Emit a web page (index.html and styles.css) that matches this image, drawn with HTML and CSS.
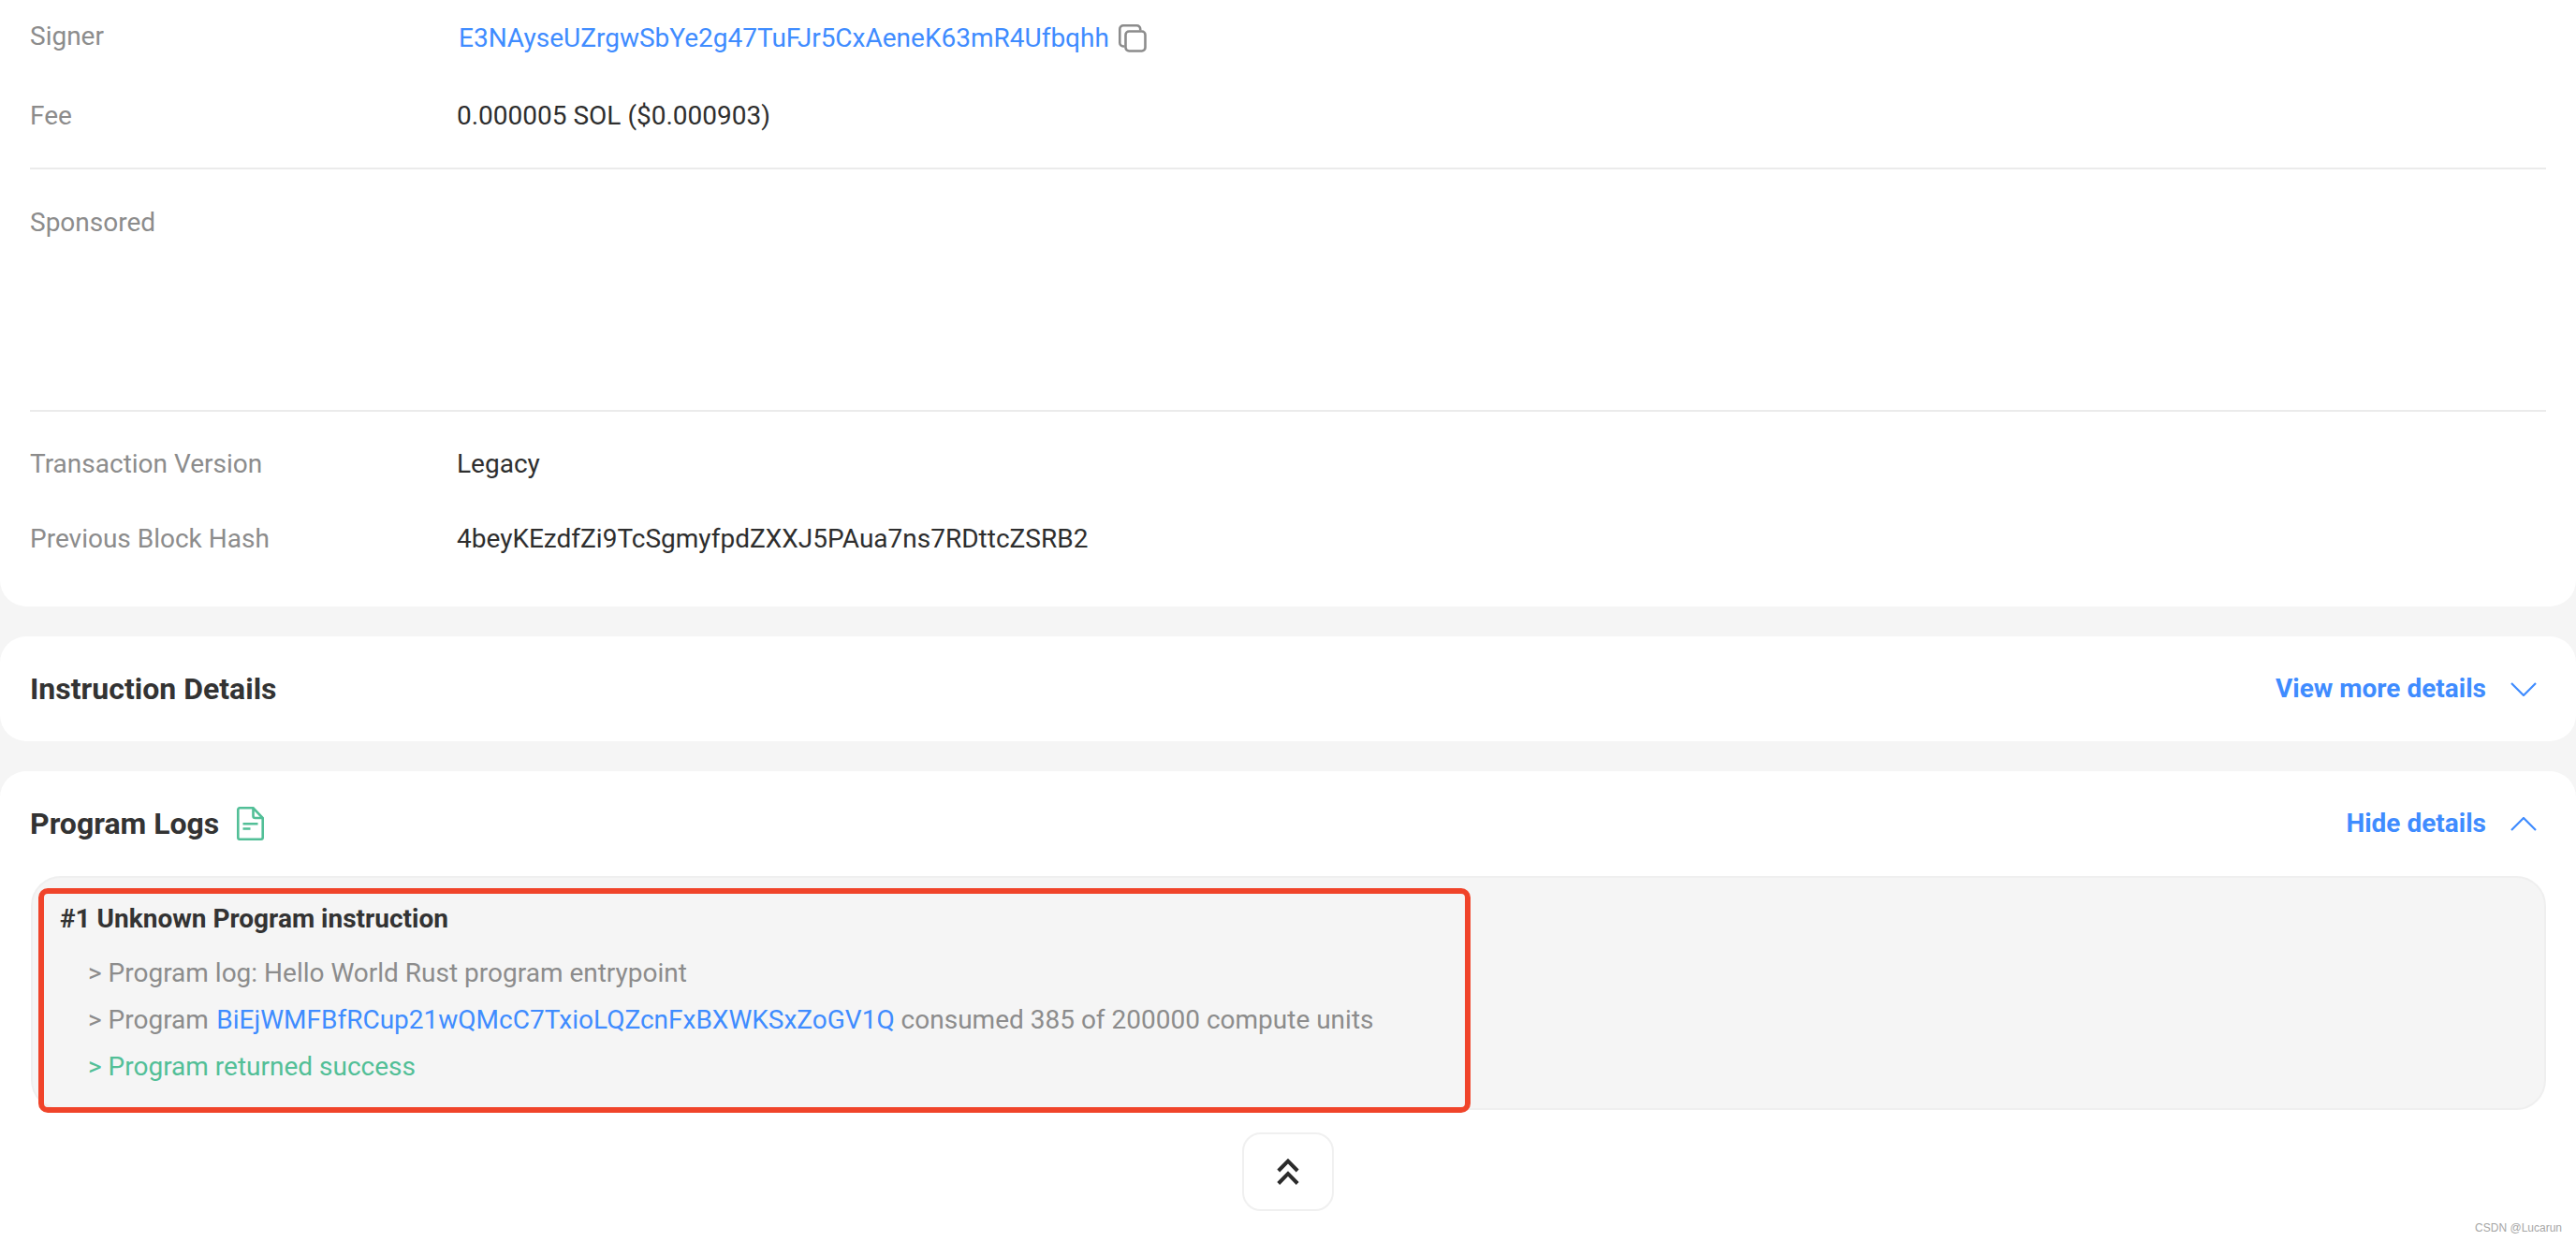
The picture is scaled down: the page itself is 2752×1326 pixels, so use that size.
FILE: index.html
```html
<!DOCTYPE html>
<html lang="en">
<head>
<meta charset="utf-8">
<title>Transaction details</title>
<link rel="stylesheet" href="styles.css">
</head>
<body>
<section class="card overview">
  <div class="row row-signer">
    <span class="label">Signer</span>
    <span class="value value-signer">
      <a class="link" href="#">E3NAyseUZrgwSbYe2g47TuFJr5CxAeneK63mR4Ufbqhh</a>
      <svg class="copy-icon" viewBox="0 0 30 30" fill="none" stroke="#8c8c8c" stroke-width="2.6" aria-hidden="true">
        <path d="M6.5 23.5 H5 A3.7 3.7 0 0 1 1.3 19.8 V5 A3.7 3.7 0 0 1 5 1.3 H19.5 A3.7 3.7 0 0 1 23.2 5 V6.5"/>
        <rect x="7.5" y="7.5" width="21" height="21" rx="3.7"/>
      </svg>
    </span>
  </div>
  <div class="row row-fee">
    <span class="label">Fee</span>
    <span class="value">0.000005 SOL ($0.000903)</span>
  </div>
  <hr class="rule">
  <div class="row row-sponsored">
    <span class="label">Sponsored</span>
  </div>
  <hr class="rule">
  <div class="row row-version">
    <span class="label">Transaction Version</span>
    <span class="value">Legacy</span>
  </div>
  <div class="row row-hash">
    <span class="label">Previous Block Hash</span>
    <span class="value">4beyKEzdfZi9TcSgmyfpdZXXJ5PAua7ns7RDttcZSRB2</span>
  </div>
</section>

<section class="card collapsed">
  <header class="card-head">
    <h2 class="title">Instruction Details</h2>
    <a class="toggle" href="#">
      <span>View more details</span>
      <svg class="chevron" viewBox="0 0 28 15" fill="none" stroke="#3f8cff" stroke-width="2.2" aria-hidden="true"><path d="M1 1 L14 14 L27 1"/></svg>
    </a>
  </header>
</section>

<section class="card logs">
  <header class="card-head">
    <h2 class="title title-logs">Program Logs
      <svg class="doc-icon" viewBox="0 0 29 36" fill="none" stroke="#52bf97" stroke-width="2.6" aria-hidden="true">
        <path d="M1.3 3 A1.7 1.7 0 0 1 3 1.3 H17.5 L27.7 12 V33 A1.7 1.7 0 0 1 26 34.7 H3 A1.7 1.7 0 0 1 1.3 33 Z"/>
        <path d="M17.5 1.3 V10 A2 2 0 0 0 19.5 12 H27.7"/>
        <path d="M6.5 18.3 H22.5 M6.5 23.5 H14.5"/>
      </svg>
    </h2>
    <a class="toggle" href="#">
      <span>Hide details</span>
      <svg class="chevron" viewBox="0 0 28 15" fill="none" stroke="#3f8cff" stroke-width="2.2" aria-hidden="true"><path d="M1 14 L14 1 L27 14"/></svg>
    </a>
  </header>
  <div class="log-box">
    <h3 class="log-title">#1 Unknown Program instruction</h3>
    <p class="log-line">&gt; Program log: Hello World Rust program entrypoint</p>
    <p class="log-line">&gt; Program <a class="link" href="#">BiEjWMFBfRCup21wQMcC7TxioLQZcnFxBXWKSxZoGV1Q</a> consumed 385 of 200000 compute units</p>
    <p class="log-line success">&gt; Program returned success</p>
  </div>
  <div class="top-wrap">
    <button class="top-btn" type="button" aria-label="Back to top">
      <svg viewBox="0 0 24 28" fill="none" stroke="#2b2b2b" stroke-width="4" aria-hidden="true"><path d="M1.8 13 L12 2.6 L22.2 13 M1.8 26.5 L12 16.1 L22.2 26.5"/></svg>
    </button>
  </div>
</section>

<div class="annotation"></div>
<div class="watermark">CSDN @Lucarun</div>
</body>
</html>
```

FILE: styles.css
```css
* { box-sizing: border-box; }
html, body { margin: 0; padding: 0; }
body {
  position: relative;
  width: 2752px;
  height: 1326px;
  overflow: hidden;
  background: #f5f5f5;
  font-family: Roboto, "Liberation Sans", sans-serif;
  font-size: 28px;
  line-height: 42px;
  color: #2e2e2e;
}
.card { background: #fff; border-radius: 28px; }
.overview { height: 648px; padding: 18px 0 0 32px; border-radius: 0 0 28px 28px; }
.row { display: flex; }
.label { width: 456px; flex: none; color: #8c8c8c; }
.value { display: flex; align-items: center; gap: 10px; }
.value-signer { margin: 2px 0 0 2px; }
.link { color: #3f8cff; text-decoration: none; }
.row-fee { margin-top: 41px; }
.rule { height: 2px; margin: 34px 0 0; border: 0; background: #ebebeb; width: 2688px; }
.row-sponsored { margin-top: 36px; height: 186px; }
.row-sponsored + .rule { margin-top: 35px; }
.row-version { margin-top: 35px; }
.row-hash { margin-top: 38px; }
.copy-icon { width: 30px; height: 30px; flex: none; }
.collapsed { height: 112px; margin-top: 32px; }
.card-head { display: flex; align-items: center; justify-content: space-between; height: 112px; padding: 0 42px 0 32px; }
.title { margin: 0; font-size: 32px; font-weight: 700; color: #333; display: flex; align-items: center; gap: 19px; }
.toggle { display: flex; align-items: center; gap: 26px; color: #3f8cff; font-weight: 700; text-decoration: none; }
.chevron { width: 28px; height: 15px; flex: none; }
.doc-icon { width: 29px; height: 36px; flex: none; }
.logs { margin-top: 32px; height: 502px; border-radius: 28px 28px 0 0; }
.log-box {
  margin: 0 32px 0 33px;
  height: 250px;
  padding: 23px 29px 0;
  background: #f5f5f5;
  border: 2px solid #efefef;
  border-radius: 32px;
}
.log-title { margin: 0 0 16px; font-size: 28px; font-weight: 700; color: #333; line-height: 42px; }
.log-line { margin: 8px 0 0 30px; color: #8c8c8c; line-height: 42px; }
.log-line .link { margin-left: 1.5px; }
.success { color: #52bf97; }
.top-wrap { display: flex; justify-content: center; margin-top: 24px; }
.top-btn {
  display: flex; align-items: center; justify-content: center;
  width: 98px; height: 84px; padding: 0;
  background: #fff;
  border: 2px solid #f0f0f0;
  border-radius: 20px;
}
.top-btn svg { width: 24px; height: 28px; }
.annotation {
  position: absolute; left: 41px; top: 949px; width: 1530px; height: 240px;
  border: 6px solid #f0442a; border-radius: 10px; pointer-events: none;
}
.watermark {
  position: absolute; right: 15px; top: 1304px;
  font-family: "Liberation Sans", sans-serif; font-size: 12px; line-height: 16px; color: #a6a6a6;
}
```
